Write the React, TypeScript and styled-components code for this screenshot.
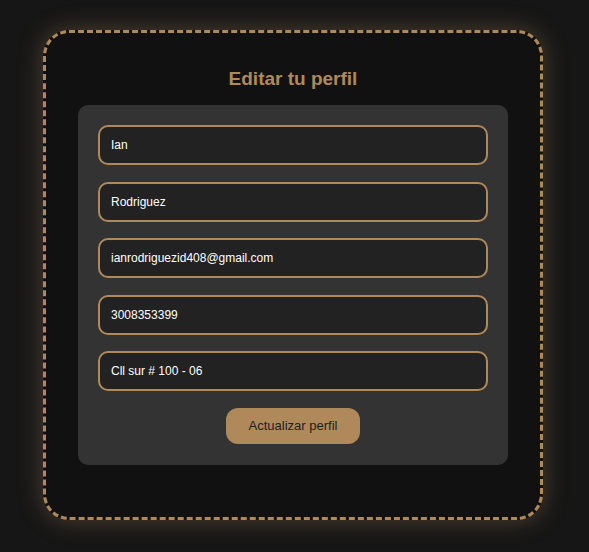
import React from "react";
import styled, { createGlobalStyle } from "styled-components";

const Global = createGlobalStyle`
  html, body {
    margin: 0;
    padding: 0;
    background: #161616;
    font-family: "Liberation Sans", Arial, sans-serif;
  }
`;

const Page = styled.div`
  min-height: 552px;
  padding: 30px 0 0 43px;
  box-sizing: border-box;
`;

const Frame = styled.div`
  width: 500px;
  box-sizing: border-box;
  padding: 34px 32px 52px;
  border: 3px dashed #b0895b;
  border-radius: 26px;
  background: #111111;
  box-shadow: 0 0 24px rgba(176, 137, 91, 0.38);
`;

const Title = styled.h2`
  margin: 0 0 15px;
  text-align: center;
  font-size: 19px;
  line-height: 23px;
  font-weight: 700;
  color: #b0895b;
`;

const Card = styled.form`
  display: flex;
  flex-direction: column;
  align-items: center;
  gap: 16.5px;
  padding: 20px 20px 21px;
  background: #333333;
  border-radius: 10px;
`;

const Field = styled.input`
  width: 100%;
  height: 40px;
  box-sizing: border-box;
  padding: 0 11px;
  background: #222222;
  border: 2px solid #b0895b;
  border-radius: 10px;
  color: #ffffff;
  font-family: inherit;
  font-size: 12px;
  outline: none;
`;

const Button = styled.button<{ $tone?: string }>`
  height: 36px;
  padding: 0 23px;
  border: none;
  border-radius: 12px;
  background: ${(p) => p.$tone || "#b0895b"};
  color: #1e1e1e;
  font-family: inherit;
  font-size: 13px;
  cursor: pointer;
`;

const fields = [
  "Ian",
  "Rodriguez",
  "ianrodriguezid408@gmail.com",
  "3008353399",
  "Cll sur # 100 - 06",
];

export default function App() {
  return (
    <Page>
      <Global />
      <Frame>
        <Title>Editar tu perfil</Title>
        <Card onSubmit={(e) => e.preventDefault()}>
          {fields.map((v) => (
            <Field key={v} defaultValue={v} />
          ))}
          <Button type="submit">Actualizar perfil</Button>
        </Card>
      </Frame>
    </Page>
  );
}
